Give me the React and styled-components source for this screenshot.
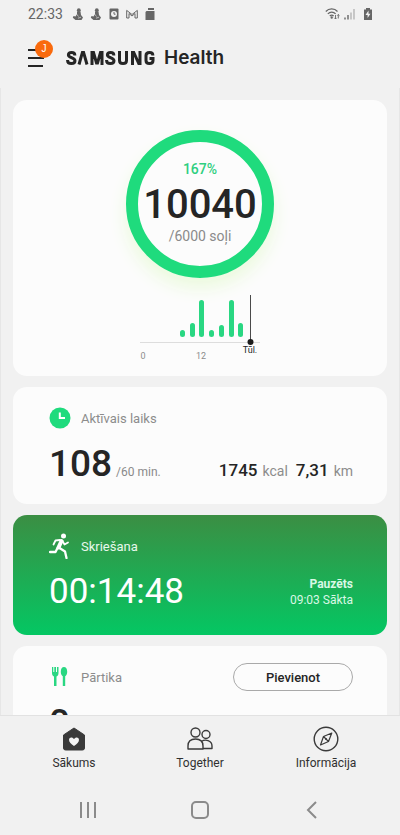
import React from 'react';
import styled, { createGlobalStyle } from 'styled-components';

const GlobalStyle = createGlobalStyle`
  * {
    box-sizing: border-box;
  }

  body {
    margin: 0;
    background-color: #f1f1f1;
    font-family: Roboto, sans-serif;
    color: #252525;
  }
`;

const Screen = styled.div`
  display: flex;
  flex-direction: column;
  height: 100vh;
  overflow: hidden;
`;

const StatusBar = styled.div`
  display: flex;
  justify-content: space-between;
  align-items: center;
  flex: none;
  height: 28px;
  padding: 0 27px 0 28px;
  color: #666666;
`;

const StatusGroup = styled.div`
  display: flex;
  align-items: center;
  gap: ${props => props.$gap}px;
`;

const Time = styled.span`
  margin-right: 3px;
  font-size: 14px;
`;

const Header = styled.header`
  display: flex;
  align-items: center;
  flex: none;
  gap: 14px;
  height: 60px;
  padding: 0 28px;
`;

const MenuButton = styled.button`
  position: relative;
  width: 24px;
  height: 24px;
  padding: 0;
  border: none;
  background: none;
`;

const Badge = styled.span`
  position: absolute;
  top: -6px;
  left: 7px;
  width: 18px;
  height: 18px;
  border-radius: 50%;
  background-color: #f96a0d;
  color: white;
  font-size: 10px;
  font-weight: 300;
  line-height: 18px;
  text-align: center;
`;

const Brand = styled.h1`
  display: flex;
  align-items: center;
  gap: 8px;
  margin: 0;
  font-family: Inter, sans-serif;
  font-size: 19px;
  font-weight: 600;
  line-height: 24px;
`;

const Content = styled.main`
  display: flex;
  flex-direction: column;
  flex: 1;
  gap: 11px;
  min-height: 0;
  padding: 12px 12px 0;
  border-left: 1px solid #e6e6e6;
  border-right: 1px solid #e6e6e6;
  overflow: hidden;
`;

const Card = styled.section`
  display: flex;
  flex-direction: column;
  flex: none;
  padding: 20px 34px 15px 36px;
  border-radius: 14px;
  background-color: #fcfcfc;
`;

const StepsCard = styled(Card)`
  align-items: center;
  gap: 15px;
  padding: 30px 20px 13px;
`;

const RunCard = styled(Card)`
  padding-bottom: 18px;
  background: linear-gradient(#3b8e43, #04c763);
  color: white;
`;

const Ring = styled.div`
  display: flex;
  flex-direction: column;
  align-items: center;
  justify-content: center;
  width: 148px;
  height: 148px;
  padding-bottom: 4px;
  border: 12px solid #1fdb7d;
  border-radius: 50%;
  box-shadow: 0 10px 18px #ebfadd;
`;

const Percent = styled.span`
  font-size: 14px;
  font-weight: 500;
  line-height: 16px;
  color: #2fcf80;
`;

const Steps = styled.span`
  padding-top: 4px;
  font-size: 40px;
  font-weight: 500;
  line-height: 47px;
`;

const Goal = styled.span`
  font-size: 14px;
  line-height: 16px;
  color: #8a8a8a;
`;

const ChartText = styled.text`
  font-size: 9px;
  text-anchor: middle;
  fill: ${props => props.$color};
`;

const CardHead = styled.div`
  display: flex;
  align-items: center;
  gap: 10px;
  height: 22px;
`;

const CardTitle = styled.h2`
  flex: 1;
  margin: 0;
  font-size: 13px;
  font-weight: 400;
  color: ${props => props.$color || '#8c8c8c'};
`;

const CardBody = styled.div`
  display: flex;
  justify-content: space-between;
  align-items: ${props => props.$align || 'baseline'};
  margin-top: 10px;
`;

const BigNumber = styled.span`
  font-size: 37px;
  font-weight: 500;
  line-height: 50px;
`;

const Duration = styled.span`
  font-size: 35px;
  line-height: 50px;
`;

const Small = styled.span`
  margin-left: 4px;
  font-size: 12px;
  color: #8a8a8a;
`;

const Metrics = styled.div`
  display: flex;
  align-items: baseline;
  gap: 5px;
`;

const MetricValue = styled.span`
  font-size: 17px;
  font-weight: 500;
`;

const MetricUnit = styled.span`
  margin-right: ${props => (props.$last ? 0 : 3)}px;
  font-size: 14px;
  color: #8c8c8c;
`;

const RunState = styled.div`
  font-size: 12px;
  line-height: 16px;
  text-align: right;
  color: #d9f8e5;
`;

const AddButton = styled.button`
  width: 120px;
  height: 28px;
  border: 1px solid #a9a9a9;
  border-radius: 14px;
  background: none;
  font-family: Roboto, sans-serif;
  font-size: 13px;
  font-weight: 500;
  color: #252525;
`;

const TabBar = styled.nav`
  display: flex;
  flex: none;
  padding: 10px 11px 0;
  border-top: 1px solid #e2e2e2;
`;

const Tab = styled.a`
  display: flex;
  flex: 1;
  flex-direction: column;
  align-items: center;
  gap: 3px;
  height: 58px;
  font-size: 12px;
  line-height: 16px;
  color: #303030;
  text-decoration: none;
`;

const SystemBar = styled.div`
  display: flex;
  flex: none;
  padding: 0 32px;
`;

const SystemButton = styled.button`
  display: flex;
  flex: 1;
  align-items: center;
  justify-content: center;
  height: 51px;
  padding: 0;
  border: none;
  background: none;
  color: #8b8b8b;
`;

// Steps per two hours: x position and height of each bar
const bars = [
    { x: 45, h: 7 },
    { x: 55, h: 14 },
    { x: 64, h: 37 },
    { x: 74, h: 7 },
    { x: 84, h: 12 },
    { x: 94, h: 37 },
    { x: 103, h: 14 },
];

const GestureIcon = () => (
    <svg width="12" height="13" viewBox="0 0 12 13" fill="currentColor">
        <circle cx="6.8" cy="2.2" r="1.9" />
        <path d="M5 3.5L8.5 3.5L9 7L11 9.5L9.5 12L3.5 12L.8 9.8L1.5 8L3.5 8.5L5 6Z" />
        <path d="M4.5 6L6.5 8.5M6 10.2L9 9.2" stroke="#f1f1f1" strokeWidth=".6" />
    </svg>
);

const SamsungLogo = () => (
    <svg width="90" height="14" viewBox="0 0 90 14">
        <g fill="none" stroke="#252525" strokeWidth="3">
            <path d="M8.8 4.5V4C8.8 2 7.6 1.5 5.6 1.5S2.4 2.2 2.4 4C2.4 6.9 9 6.5 9 9.8C9 11.8 7.7 12.5 5.4 12.5S1.6 11.8 1.6 9.5V9" />
            <path d="M13 13.5L16.5 1.2H17.5L21 13.5" />
            <path d="M26 14V1.5H27.5L30.5 12H31.5L34.5 1.5H36V14" />
            <path d="M47.8 4.5V4C47.8 2 46.6 1.5 44.6 1.5S41.4 2.2 41.4 4C41.4 6.9 48 6.5 48 9.8C48 11.8 46.7 12.5 44.4 12.5S40.6 11.8 40.6 9.5V9" />
            <path d="M53.5 0V9.5C53.5 11.6 54.5 12.5 57 12.5S60.5 11.6 60.5 9.5V0" />
            <path d="M66.5 14V1H67.5L73 13H74V0" />
            <path d="M86.8 4.5V4C86.8 2.2 85.6 1.5 83.5 1.5S80 2.2 80 4.5V9.5C80 11.8 81.2 12.5 83.5 12.5S87 11.8 87 9.5V7.5H83.5" />
        </g>
    </svg>
);

const App = () => {
    return (
        <Screen>
            <GlobalStyle />
            <StatusBar>
                <StatusGroup $gap={6}>
                    <Time>22:33</Time>
                    <GestureIcon />
                    <GestureIcon />
                    <svg width="12" height="12" viewBox="0 0 12 12">
                        <rect x="1.5" y=".5" width="9" height="11" rx="1" fill="currentColor" />
                        <circle cx="6" cy="6" r="3" fill="#f1f1f1" />
                        <path d="M6 4V6.2H7.5" fill="none" stroke="currentColor" />
                    </svg>
                    <svg width="12" height="12" viewBox="0 0 12 12" fill="none" stroke="currentColor" strokeWidth="1">
                        <path d="M.7 10V2.4L6 6.5L11.3 2.4V10H9V5.5L6 8L3 5.5V10Z" />
                    </svg>
                    <svg width="12" height="12" viewBox="0 0 12 12" fill="currentColor">
                        <path d="M4 0H10V2H4ZM2.5 3H10.5V12H1.5V4Z" />
                    </svg>
                </StatusGroup>
                <StatusGroup $gap={4}>
                    <svg width="15" height="12" viewBox="0 0 15 12" fill="none" stroke="currentColor" strokeWidth="1.2">
                        <path d="M.8 3.5C4 0 9.5 0 12.5 3.5M2.8 5.8C5 3.5 8.5 3.5 10.6 5.8M4.8 8C6 6.8 7.5 6.8 8.6 8" />
                        <circle cx="6.7" cy="9.5" r=".6" />
                        <path d="M10.5 7V11M9.3 9.8L10.5 11L11.7 9.8M13.3 10.5V6.5M12.2 7.7L13.3 6.5L14.5 7.7" strokeWidth=".9" />
                    </svg>
                    <svg width="11" height="12" viewBox="0 0 11 12" strokeWidth="1.4">
                        <path d="M1 9.5V11.5M4 7V11.5" stroke="#666666" />
                        <path d="M7 4.5V11.5M10 1V11.5" stroke="#b5b5b5" />
                    </svg>
                    <svg width="14" height="12" viewBox="0 0 14 12">
                        <path d="M7 0H11V1.5H13V12H5V1.5H7Z" fill="currentColor" />
                        <path d="M9.5 2.5L6.5 7H8.6V10L11.5 5.8H9.5Z" fill="#f1f1f1" />
                    </svg>
                </StatusGroup>
            </StatusBar>

            <Header>
                <MenuButton aria-label="Izvēlne">
                    <svg width="24" height="24" viewBox="0 0 24 24" stroke="#252525" strokeWidth="2">
                        <path d="M0 4H14M0 12H16M0 20H15" />
                    </svg>
                    <Badge>J</Badge>
                </MenuButton>
                <Brand aria-label="Samsung Health">
                    <SamsungLogo />
                    Health
                </Brand>
            </Header>

            <Content>
                <StepsCard>
                    <Ring>
                        <Percent>167%</Percent>
                        <Steps>10040</Steps>
                        <Goal>/6000 soļi</Goal>
                    </Ring>
                    <svg width="130" height="70" viewBox="0 0 130 70">
                        <path d="M5 49.5H125" stroke="#dddddd" />
                        {bars.map(bar => (
                            <rect key={bar.x} x={bar.x} y={44 - bar.h} width="5" height={bar.h} rx="2.5" fill="#29d782" />
                        ))}
                        <path d="M115.5 2V49" stroke="#4a4a4a" />
                        <circle cx="115.5" cy="49" r="3" fill="#1c1c1c" />
                        <ChartText x="8" y="66" $color="#8c8c8c">0</ChartText>
                        <ChartText x="66" y="66" $color="#8c8c8c">12</ChartText>
                        <ChartText x="115" y="60" $color="#252525">Tūl.</ChartText>
                    </svg>
                </StepsCard>

                <Card>
                    <CardHead>
                        <svg width="22" height="22" viewBox="0 0 22 22">
                            <circle cx="11" cy="11" r="10.5" fill="#1fdb7d" />
                            <path d="M10.8 5.5V11H16" fill="none" stroke="white" strokeWidth="2" />
                        </svg>
                        <CardTitle>Aktīvais laiks</CardTitle>
                    </CardHead>
                    <CardBody>
                        <div>
                            <BigNumber>108</BigNumber>
                            <Small>/60 min.</Small>
                        </div>
                        <Metrics>
                            <MetricValue>1745</MetricValue>
                            <MetricUnit>kcal</MetricUnit>
                            <MetricValue>7,31</MetricValue>
                            <MetricUnit $last>km</MetricUnit>
                        </Metrics>
                    </CardBody>
                </Card>

                <RunCard>
                    <CardHead>
                        <svg width="22" height="26" viewBox="0 0 22 26" fill="none" stroke="white" strokeLinecap="round" strokeLinejoin="round">
                            <circle cx="14.5" cy="3" r="2.5" fill="white" stroke="none" />
                            <path d="M12.5 8L9.5 14.5" strokeWidth="4" />
                            <path d="M11 7L6.5 7.5L4.5 11.5" strokeWidth="1.8" />
                            <path d="M13.5 8L15.5 11.5L19 9.5" strokeWidth="1.8" />
                            <path d="M8.5 15L6.5 19H1M10.5 15L16 18.5L17.5 25" strokeWidth="2.3" />
                        </svg>
                        <CardTitle $color="#e8f8ec">Skriešana</CardTitle>
                    </CardHead>
                    <CardBody $align="center">
                        <Duration>00:14:48</Duration>
                        <RunState>
                            <strong>Pauzēts</strong>
                            <br />
                            09:03 Sākta
                        </RunState>
                    </CardBody>
                </RunCard>

                <Card>
                    <CardHead>
                        <svg width="22" height="22" viewBox="0 0 22 22" fill="#29d782">
                            <path d="M3 1H4.3V6H5.3V1H7V6H8V1H9.5V7C9.5 9 8.8 10 7.5 10.5V20H5V10.5C3.7 10 3 9 3 7Z" />
                            <path d="M15 1C17 1 18.2 3 18.2 5.8C18.2 8 17.5 9.7 16.2 10.3V20H13.8V10.3C12.5 9.7 11.8 8 11.8 5.8C11.8 3 13 1 15 1Z" />
                        </svg>
                        <CardTitle>Pārtika</CardTitle>
                        <AddButton>Pievienot</AddButton>
                    </CardHead>
                    <CardBody>
                        <BigNumber>0</BigNumber>
                    </CardBody>
                </Card>
            </Content>

            <TabBar>
                <Tab href="#home">
                    <svg width="26" height="26" viewBox="0 0 26 26">
                        <path d="M13 2L23.5 9V22Q23.5 24 21.5 24H4.5Q2.5 24 2.5 22V9Z" fill="#3a3a3a" stroke="#3a3a3a" strokeLinejoin="round" />
                        <path d="M13 20C10 17.8 8 16.2 8 13.8C8 11 11.5 10.5 13 13C14.5 10.5 18 11 18 13.8C18 16.2 16 17.8 13 20Z" fill="#f4f4f4" />
                    </svg>
                    Sākums
                </Tab>
                <Tab href="#together">
                    <svg width="26" height="26" viewBox="0 0 26 26" fill="none" stroke="#3a3a3a" strokeWidth="1.4" strokeLinejoin="round">
                        <circle cx="8.5" cy="6.5" r="4.5" />
                        <path d="M1 23V20C1 15.5 4 13 8.5 13S16 15.5 16 20V23Z" />
                        <circle cx="19" cy="8.5" r="4" />
                        <path d="M14.5 15.5C18 13 25 14 25 20V22.5H16" />
                    </svg>
                    Together
                </Tab>
                <Tab href="#info">
                    <svg width="26" height="26" viewBox="0 0 26 26" fill="none" stroke="#3a3a3a" strokeWidth="1.4" strokeLinejoin="round">
                        <circle cx="13" cy="13" r="11.8" />
                        <path d="M18.8 7L15.5 15.5L7.5 19L10.5 10.5ZM10.5 10.5L15.5 15.5" strokeWidth="1.2" />
                        <circle cx="13" cy="13" r="1" fill="#3a3a3a" stroke="none" />
                    </svg>
                    Informācija
                </Tab>
            </TabBar>

            <SystemBar>
                <SystemButton aria-label="Nesenās">
                    <svg width="18" height="18" viewBox="0 0 18 18" stroke="currentColor" strokeWidth="2">
                        <path d="M2 1V17M9 1V17M16 1V17" />
                    </svg>
                </SystemButton>
                <SystemButton aria-label="Mājas">
                    <svg width="20" height="18" viewBox="0 0 20 18" fill="none" stroke="currentColor" strokeWidth="2">
                        <rect x="2" y="1" width="16" height="16" rx="4" />
                    </svg>
                </SystemButton>
                <SystemButton aria-label="Atpakaļ">
                    <svg width="18" height="18" viewBox="0 0 18 18" fill="none" stroke="currentColor" strokeWidth="2">
                        <path d="M13 1L5 9L13 17" />
                    </svg>
                </SystemButton>
            </SystemBar>
        </Screen>
    );
};

export default App;
